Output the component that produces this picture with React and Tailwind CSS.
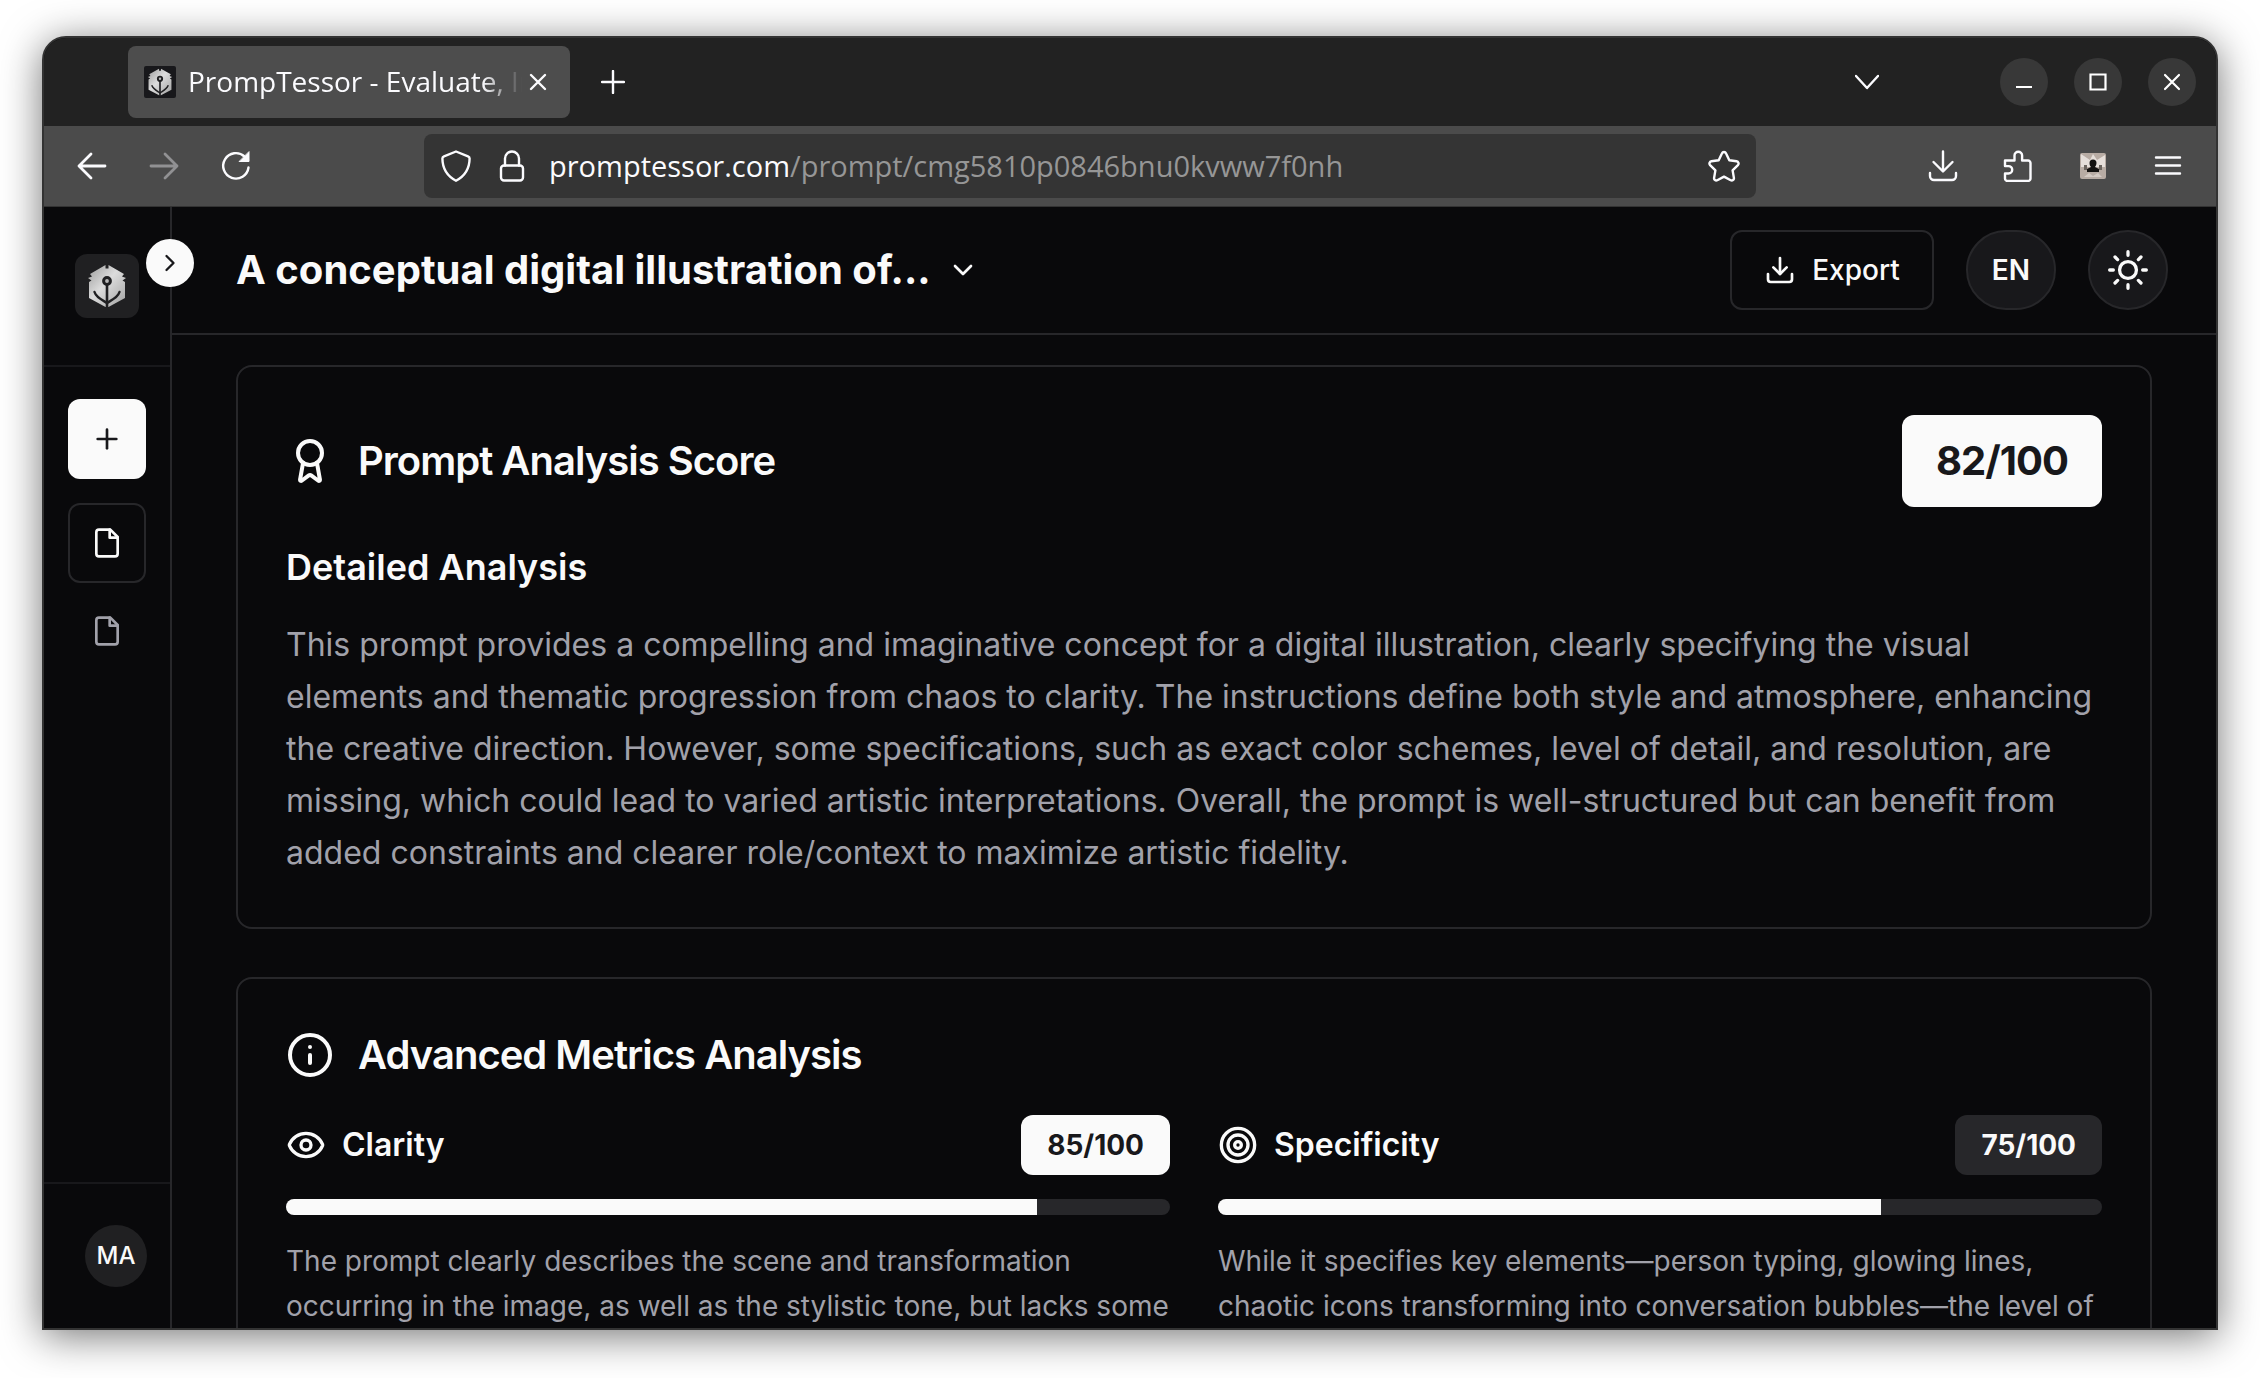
import {
  Plus,
  ChevronRight,
  ChevronDown,
  Download,
  Award,
  Info,
  Eye,
  Target,
} from "lucide-react";

const metrics = [
  {
    name: "Clarity",
    icon: Eye,
    score: 85,
    text: "The prompt clearly describes the scene and transformation occurring in the image, as well as the stylistic tone, but lacks some",
  },
  {
    name: "Specificity",
    icon: Target,
    score: 75,
    text: "While it specifies key elements—person typing, glowing lines, chaotic icons transforming into conversation bubbles—the level of",
  },
];

export default function App() {
  return (
    <div className="h-screen bg-white px-[42px] pt-9 pb-12 font-[Inter,sans-serif]">
      <div className="flex h-full flex-col overflow-hidden rounded-t-3xl border-2 border-[#333333] bg-[#09090b] shadow-[0_6px_40px_rgba(0,0,0,0.55)]">
        <TabBar />
        <Toolbar />
        <div className="flex min-h-0 flex-1">
          <Sidebar />
          <div className="flex min-w-0 flex-1 flex-col">
            <Header />
            <main className="flex-1 space-y-12 overflow-hidden px-16 pt-[30px]">
              <ScoreCard />
              <MetricsCard />
            </main>
          </div>
        </div>
      </div>
    </div>
  );
}

/* Browser window */

function TabBar() {
  return (
    <div className="flex h-[88px] shrink-0 items-center bg-[#222222] pr-5 pl-[84px] text-[#fbfbfe]">
      <div className="flex h-[72px] w-[442px] items-center rounded-lg bg-[#4d4d4d] px-4">
        <span className="mr-3 flex size-8 shrink-0 items-center justify-center rounded-xs bg-[#18181b]">
          <Logo className="size-7" />
        </span>
        <span className="min-w-0 flex-1 overflow-hidden pb-0.5 font-['Open_Sans',sans-serif] text-[28px] whitespace-nowrap [mask-image:linear-gradient(to_right,black_88%,transparent)]">
          PrompTessor - Evaluate, Improve
        </span>
        <button aria-label="Close tab" className="flex size-8 items-center justify-center">
          <svg viewBox="0 0 24 24" className="size-6" fill="none" stroke="currentColor" strokeWidth="2.4" strokeLinecap="round">
            <path d="M5 5l14 14M19 5L5 19" />
          </svg>
        </button>
      </div>
      <button aria-label="New tab" className="ml-[25px] flex size-9 items-center justify-center">
        <svg viewBox="0 0 24 24" className="size-6" fill="none" stroke="currentColor" strokeWidth="2.4" strokeLinecap="round">
          <path d="M12 1v22M1 12h22" />
        </svg>
      </button>
      <button aria-label="List all tabs" className="mr-[121px] ml-auto">
        <svg viewBox="0 0 24 24" className="size-6" fill="none" stroke="currentColor" strokeWidth="2.4" strokeLinecap="round" strokeLinejoin="round">
          <path d="M1 6l11 12L23 6" />
        </svg>
      </button>
      <div className="flex gap-[26px]">
        <WindowButton label="Minimize">
          <path d="M8 21h16" />
        </WindowButton>
        <WindowButton label="Maximize">
          <path d="M8.5 8.5h15v15h-15z" />
        </WindowButton>
        <WindowButton label="Close">
          <path d="M9 9l14 14M23 9L9 23" strokeLinecap="round" />
        </WindowButton>
      </div>
    </div>
  );
}

function WindowButton({ label, children }) {
  return (
    <button aria-label={label} className="flex size-12 items-center justify-center rounded-full bg-[#383838]">
      <svg viewBox="0 0 32 32" className="size-8" fill="none" stroke="white" strokeWidth="2.2">
        {children}
      </svg>
    </button>
  );
}

function Toolbar() {
  return (
    <div className="flex h-[81px] shrink-0 items-center border-b border-[#333333] bg-[#4b4b4b] px-7 text-[#fbfbfe]">
      <div className="flex gap-8 pr-[168px]">
        <ToolbarButton label="Back">
          <path d="M29 16H3M15 4L3 16l12 12" strokeWidth="2.8" />
        </ToolbarButton>
        <ToolbarButton label="Forward" className="opacity-40">
          <path d="M3 16h26M17 4l12 12-12 12" strokeWidth="2.8" />
        </ToolbarButton>
        <ToolbarButton label="Reload">
          <path d="M28.5 17.5A12.700 12.700 0 1 1 24.5 6.5L28 10" />
          <path d="M29 2v9.5h-9.5z" fill="currentColor" strokeWidth="1" />
        </ToolbarButton>
      </div>
      <div className="flex h-16 min-w-0 flex-1 items-center rounded-lg bg-[#343434] px-3">
        <ToolbarButton label="Tracking protection">
          <path d="M16 1.500L28 6.300c1 .4 1.600 1.200 1.600 2.200C29.500 18 25 26 16 30.700 7 26 2.500 18 2.400 8.500c0-1 .6-1.800 1.600-2.200z" />
        </ToolbarButton>
        <span className="w-4" />
        <ToolbarButton label="Site information">
          <rect x="5" y="15.5" width="22" height="15" rx="3" />
          <path d="M9 15.500V8.500a7 7 0 0 1 14 0v7" />
        </ToolbarButton>
        <div className="ml-[17px] min-w-0 flex-1 truncate font-['Open_Sans',sans-serif] text-[29px]">
          promptessor.com
          <span className="text-[#969696]">/prompt/cmg5810p0846bnu0kvww7f0nh</span>
        </div>
        <ToolbarButton label="Bookmark this page">
          <path d="M16 2c1 0 1.700.6 2.100 1.500l3.200 6.700 7.300 1.100c1.900.3 2.600 2.400 1.300 3.800l-5.300 5.300 1.300 7.500c.3 1.900-1.600 3.100-3.200 2.300L16 26.600l-6.700 3.600c-1.600.8-3.500-.4-3.200-2.300l1.300-7.500-5.300-5.300c-1.300-1.400-.6-3.500 1.300-3.800l7.300-1.100 3.200-6.700C14.300 2.600 15 2 16 2z" />
        </ToolbarButton>
      </div>
      <div className="flex items-center gap-[35px] pl-[167px]">
        <ToolbarButton label="Downloads">
          <path d="M16 1.500V21M6.500 12l9.500 9.500 9.500-9.500M3 23v3a4 4 0 0 0 4 4h18a4 4 0 0 0 4-4v-3" />
        </ToolbarButton>
        <ToolbarButton label="Extensions">
          <path d="M3 10.500h9.500V5.500a3.800 3.800 0 0 1 7.600 0v5H26a2.500 2.500 0 0 1 2.500 2.500v15.500A2.500 2.500 0 0 1 26 31H5.500A2.500 2.500 0 0 1 3 28.500V23.500h3.500a3.700 3.700 0 0 0 0-7.400H3z" />
        </ToolbarButton>
        <button aria-label="Account" className="flex w-10 justify-center">
          <svg viewBox="0 0 26 26" className="size-[26px] rounded-xs">
            <rect width="26" height="26" fill="#b8aca4" />
            <path d="M1 1l9 6 3-6 4 6 8-5v12H1z" fill="#e6dfda" />
            <path d="M4 24l5-4 4 3 5-3 4 4z" fill="#d5cbc4" />
            <path d="M9.500 10a3.500 3.500 0 0 1 7 0c0 2-1 3-1.500 4l4 2v3H7v-3l4-2c-.8-1-1.500-2-1.500-4z" fill="#141210" />
            <path d="M4 12h3v5H4zM19 12h3v5h-3z" fill="#6b645e" />
          </svg>
        </button>
        <ToolbarButton label="Menu">
          <path d="M4 7.500h24M4 15.500h24M4 23.500h24" />
        </ToolbarButton>
      </div>
    </div>
  );
}

function ToolbarButton({ label, className = "", children }) {
  return (
    <button aria-label={label} className={`flex w-10 shrink-0 justify-center ${className}`}>
      <svg
        viewBox="0 0 32 32"
        className="size-8"
        fill="none"
        stroke="currentColor"
        strokeWidth="2.4"
        strokeLinecap="round"
        strokeLinejoin="round"
      >
        {children}
      </svg>
    </button>
  );
}

/* PrompTessor page */

function Logo({ className }) {
  return (
    <svg viewBox="0 0 40 44" className={className}>
      <defs>
        <linearGradient id="metal" x1="0" y1="0" x2="1" y2="1">
          <stop offset="0" stopColor="#9b9b9b" />
          <stop offset="0.45" stopColor="#dcdcdc" />
          <stop offset="1" stopColor="#a0a0a0" />
        </linearGradient>
      </defs>
      <path
        d="M18.500 1v3.500h3V1L37 10l-2 2.500 4 1.500-3.500 2.500L38 18v16L21.500 43h-3L2 34V18l2.500-1.500L1 14l4-1.500L3 10z"
        fill="url(#metal)"
      />
      <g fill="none" stroke="#202022">
        <path d="M20 20v24" strokeWidth="2.6" />
        <circle cx="20" cy="17" r="3.4" strokeWidth="3" fill="#b9b9b9" />
        <path d="M7.500 28c1.500 5 6 7 12.500 11 6.500-4 11-6 12.500-11" strokeWidth="2.4" strokeLinecap="round" />
      </g>
    </svg>
  );
}

function FileIcon() {
  return (
    <svg viewBox="0 0 24 24" className="size-8" fill="none" stroke="currentColor" strokeWidth="2" strokeLinecap="round" strokeLinejoin="round">
      <path d="M14.5 2H6a2 2 0 0 0-2 2v16a2 2 0 0 0 2 2h12a2 2 0 0 0 2-2V7.5L14.5 2z" />
      <path d="M14 2v6h6" />
    </svg>
  );
}

function SunIcon() {
  return (
    <svg viewBox="0 0 24 24" className="size-11" fill="none" stroke="currentColor" strokeWidth="1.8" strokeLinecap="round">
      <circle cx="12" cy="12" r="4.6" />
      <path d="M12 2v2M12 20v2M2 12h2M20 12h2M4.930 4.930l1.410 1.410M17.660 17.660l1.410 1.410M4.930 19.070l1.410-1.410M17.660 6.340l1.410-1.410" />
    </svg>
  );
}

function Sidebar() {
  return (
    <aside className="relative flex w-32 shrink-0 flex-col border-r-2 border-[#27272a]">
      <div className="flex h-40 items-center justify-center border-b-2 border-[#18181b]">
        <span className="flex size-16 items-center justify-center rounded-xl bg-[#202022]">
          <Logo className="h-11 w-10" />
        </span>
      </div>
      <button
        aria-label="Expand sidebar"
        className="absolute top-8 -right-6 z-10 flex size-12 items-center justify-center rounded-full bg-[#fafafa] text-[#18181b]"
      >
        <ChevronRight size={28} />
      </button>
      <nav className="flex flex-1 flex-col px-6 pt-8">
        <button aria-label="New prompt" className="flex h-20 items-center justify-center rounded-xl bg-[#fafafa] text-[#18181b]">
          <Plus size={32} />
        </button>
        <button aria-label="Current prompt" className="mt-6 flex h-20 items-center justify-center rounded-xl border-2 border-[#27272a] text-[#fafafa]">
          <FileIcon />
        </button>
        <button aria-label="Previous prompt" className="mt-2 flex h-20 items-center justify-center text-[#a1a1aa]">
          <FileIcon />
        </button>
      </nav>
      <div className="flex h-[146px] items-center border-t-2 border-[#18181b] pl-[41px]">
        <button className="flex size-[62px] items-center justify-center rounded-full bg-[#202022] text-2xl font-medium text-[#fafafa]">
          MA
        </button>
      </div>
    </aside>
  );
}

function Header() {
  return (
    <header className="flex h-32 shrink-0 items-center justify-between border-b-2 border-[#27272a] pr-12 pl-16 text-[#fafafa]">
      <button className="flex items-center gap-4">
        <h1 className="text-[40px] font-bold">A conceptual digital illustration of...</h1>
        <ChevronDown size={32} />
      </button>
      <div className="flex items-center gap-8">
        <button className="flex h-20 items-center gap-4 rounded-xl border-2 border-[#27272a] px-8 text-[28px] font-medium">
          <Download size={32} />
          Export
        </button>
        <button className="h-20 rounded-full border-2 border-[#27272a] bg-[#18181b] px-6 text-[28px] font-semibold">
          EN
        </button>
        <button
          aria-label="Toggle theme"
          className="flex size-20 items-center justify-center rounded-full border-2 border-[#27272a] bg-[#18181b]"
        >
          <SunIcon />
        </button>
      </div>
    </header>
  );
}

function Card({ children }) {
  return (
    <section className="rounded-2xl border-2 border-[#27272a] p-12 text-[#fafafa]">{children}</section>
  );
}

function CardTitle({ icon: Icon, children }) {
  return (
    <h2 className="flex items-center gap-6 text-[40px] leading-14 font-semibold tracking-tight">
      <Icon size={48} />
      {children}
    </h2>
  );
}

function ScoreCard() {
  return (
    <Card>
      <div className="flex items-center justify-between">
        <CardTitle icon={Award}>Prompt Analysis Score</CardTitle>
        <span className="flex h-[92px] items-center rounded-xl bg-[#fafafa] px-[34px] text-[40px] font-bold tracking-tight text-[#18181b]">
          82/100
        </span>
      </div>
      <h3 className="mt-8 text-4xl leading-14 font-semibold">Detailed Analysis</h3>
      <p className="mt-6 text-[32px] leading-[52px] text-[#a1a1aa]">
        This prompt provides a compelling and imaginative concept for a digital illustration, clearly
        specifying the visual elements and thematic progression from chaos to clarity. The instructions
        define both style and atmosphere, enhancing the creative direction. However, some
        specifications, such as exact color schemes, level of detail, and resolution, are missing, which
        could lead to varied artistic interpretations. Overall, the prompt is well-structured but can
        benefit from added constraints and clearer role/context to maximize artistic fidelity.
      </p>
    </Card>
  );
}

function MetricsCard() {
  return (
    <Card>
      <CardTitle icon={Info}>Advanced Metrics Analysis</CardTitle>
      <div className="mt-8 grid grid-cols-2 gap-12">
        {metrics.map((metric) => (
          <Metric key={metric.name} {...metric} />
        ))}
      </div>
    </Card>
  );
}

function Metric({ name, icon: Icon, score, text }) {
  const badge = score >= 80 ? "bg-[#fafafa] text-[#18181b]" : "bg-[#27272a] text-[#fafafa]";

  return (
    <div>
      <div className="flex items-center justify-between">
        <h3 className="flex items-center gap-4 text-[32px] font-semibold">
          <Icon size={40} />
          {name}
        </h3>
        <span className={`flex h-[60px] items-center rounded-xl px-[26px] text-[28px] font-bold ${badge}`}>
          {score}/100
        </span>
      </div>
      <div className="mt-6 h-4 overflow-hidden rounded-full bg-[#27272a]">
        <div className="h-full bg-[#fafafa]" style={{ width: `${score}%` }} />
      </div>
      <p className="mt-6 mb-12 text-[28px] leading-[45px] text-[#a1a1aa]">{text}</p>
    </div>
  );
}
